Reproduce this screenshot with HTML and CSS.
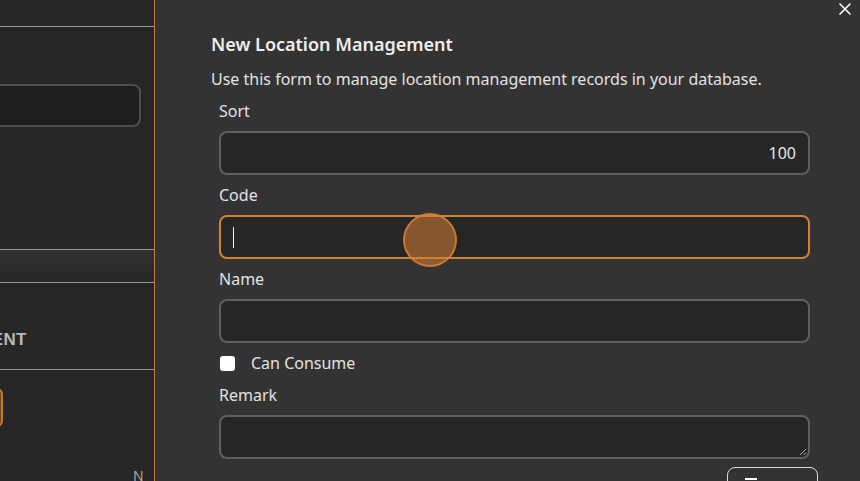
FILE: index.html
```html
<!DOCTYPE html>
<html>
<head>
<meta charset="utf-8">
<link rel="stylesheet" href="styles.css">
</head>
<body>
<div class="page">
  <aside class="under">
    <div class="under-top"></div>
    <div class="under-search"></div>
    <div class="under-bar"></div>
    <div class="under-heading">LOCATION MANAGEMENT</div>
    <div class="under-btn"></div>
    <div class="under-col">N</div>
  </aside>
  <section class="drawer">
    <button class="close" aria-label="Close">
      <svg width="12" height="12" viewBox="0 0 12 12"><path d="M1 1L11 11M11 1L1 11" stroke="#fff" stroke-width="1.6" stroke-linecap="round"/></svg>
    </button>
    <h1 class="title">New Location Management</h1>
    <p class="desc">Use this form to manage location management records in your database.</p>
    <form class="form">
      <label class="label">Sort</label>
      <div class="input num">100</div>
      <label class="label">Code</label>
      <div class="input focus"><span class="caret"></span><span class="ripple"></span></div>
      <label class="label">Name</label>
      <div class="input"></div>
      <div class="check-row"><span class="check"></span><span class="check-label">Can Consume</span></div>
      <label class="label">Remark</label>
      <div class="input textarea"><svg class="grip" width="8" height="8" viewBox="0 0 8 8"><path d="M7 1L1 7M7 4.5L4.5 7" stroke="#aaa" stroke-width="1"/></svg></div>
      <div class="actions"><div class="btn"><svg class="btn-icon" width="14" height="14" viewBox="0 0 14 14"><path d="M1 2H13" stroke="#fff" stroke-width="2"/></svg></div></div>
    </form>
  </section>
</div>
</body>
</html>
```
FILE: styles.css
```css
* { box-sizing: border-box; }
html, body { margin: 0; padding: 0; }
body {
  width: 860px;
  height: 481px;
  overflow: hidden;
  background: #333333;
  font-family: "Noto Sans", "Open Sans", sans-serif;
  color: #e8e8e8;
}
.page {
  display: flex;
  height: 481px;
  overflow: hidden;
}
.under {
  width: 155px;
  flex: none;
  background: #262626;
  border-right: 1px solid #c57a2a;
  display: flex;
  flex-direction: column;
  overflow: hidden;
  position: relative;
}
.under-top {
  height: 27px;
  border-bottom: 1px solid #9a9a9a;
  flex: none;
}
.under-search {
  margin: 57px 0 0 -40px;
  width: 181px;
  height: 43px;
  border: 2px solid #4b4d52;
  border-radius: 8px;
  background: #1e1e1e;
  flex: none;
}
.under-bar {
  margin-top: 122px;
  height: 34px;
  border-top: 1px solid #9a9a9a;
  border-bottom: 1px solid #9a9a9a;
  background: linear-gradient(#313131, #272727);
  flex: none;
}
.under-heading {
  margin: 47px 0 0 -195px;
  height: 40px;
  font-family: "Liberation Sans", Arial, sans-serif;
  font-weight: bold;
  font-size: 17px;
  color: #b8b8b8;
  letter-spacing: 0.3px;
  white-space: nowrap;
  border-bottom: 1px solid #9a9a9a;
  width: 350px;
  text-align: right;
  padding-right: 129px;
  flex: none;
}
.under-btn {
  margin: 18px 0 0 -40px;
  width: 43px;
  height: 39px;
  border: 2px solid #c57a2a;
  border-radius: 6px;
  background: #6b4a23;
  flex: none;
}
.under-col {
  margin: 41px 0 0 133px;
  font-size: 14px;
  color: #aaa;
  line-height: 16px;
}
.drawer {
  flex: 1;
  position: relative;
  padding: 32px 50px 0 56px;
  background: #333333;
  overflow: hidden;
}
.close {
  position: absolute;
  top: 3px;
  right: 9px;
  width: 12px;
  height: 12px;
  padding: 0;
  border: 0;
  background: none;
  display: block;
}
.close svg { display: block; }
.title {
  margin: 0;
  font-size: 18px;
  line-height: 24px;
  font-weight: 600;
  color: #eeeeee;
}
.desc {
  margin: 11px 0 0;
  font-size: 16px;
  line-height: 24px;
  color: #e2e2e2;
}
.form {
  display: flex;
  flex-direction: column;
  padding-left: 8px;
  margin-top: 8px;
}
.label {
  display: block;
  font-size: 16px;
  line-height: 24px;
  color: #e2e2e2;
  margin-bottom: 8px;
}
.input {
  height: 44px;
  border: 2px solid #5d6067;
  border-radius: 8px;
  background: #262626;
  margin-bottom: 8px;
  position: relative;
  font-size: 16px;
  line-height: 40px;
  padding: 0 12px;
  color: #e8e8e8;
}
.num { text-align: right; }
.focus { border-color: #d0822f; }
.caret {
  position: absolute;
  left: 12px;
  top: 10px;
  width: 1px;
  height: 21px;
  background: #f0f0f0;
}
.ripple {
  position: absolute;
  left: 182px;
  top: -4px;
  width: 54px;
  height: 54px;
  border-radius: 50%;
  background: rgba(214, 128, 52, 0.55);
  border: 2px solid rgba(214, 128, 52, 0.85);
}
.check-row {
  display: flex;
  align-items: center;
  height: 24px;
  margin: 0 0 8px;
}
.check {
  width: 15px;
  height: 15px;
  margin-left: 1px;
  background: #ffffff;
  border-radius: 3px;
}
.check-label {
  margin-left: 16px;
  font-size: 16px;
  line-height: 24px;
  color: #e2e2e2;
}
.textarea { height: 44px; }
.grip {
  position: absolute;
  right: 1px;
  bottom: 1px;
}
.actions {
  display: flex;
  justify-content: flex-end;
  margin-right: -8px;
}
.btn {
  width: 91px;
  height: 40px;
  border: 1.5px solid #dcdcdc;
  border-radius: 8px;
  padding: 9px 0 0 16px;
}
.btn-icon { display: block; }
```
